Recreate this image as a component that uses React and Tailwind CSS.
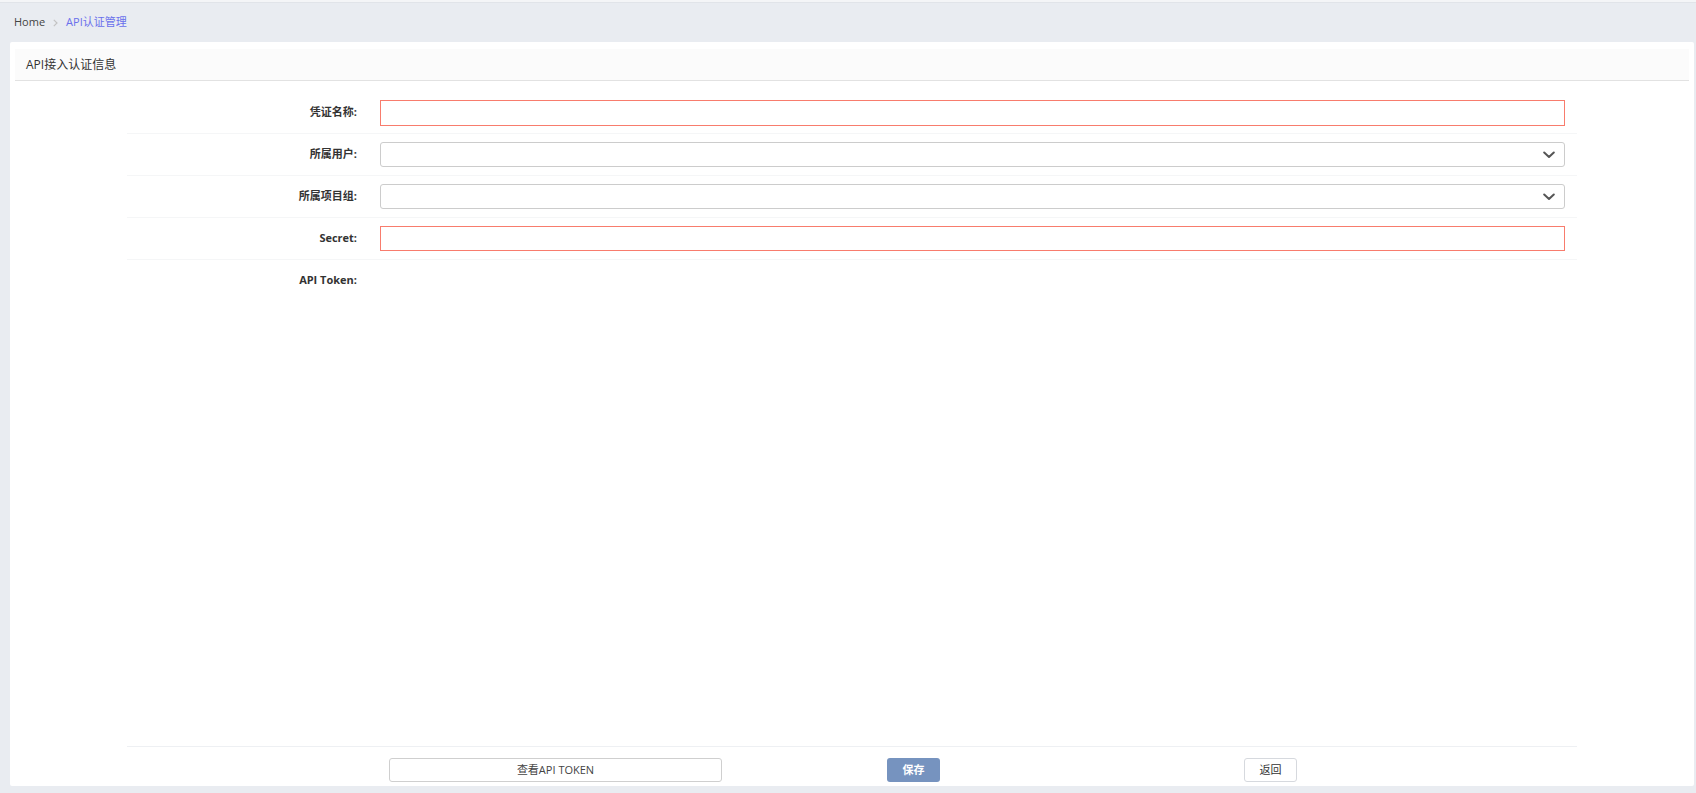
import React from "react";

const FONT = { fontFamily: '"Open Sans", "Noto Sans CJK SC", sans-serif' };

function Chevron() {
  return (
    <svg width="12" height="8" viewBox="0 0 12 8" fill="none">
      <polyline points="1.2,1.5 6,6 10.8,1.5" stroke="#555" strokeWidth="2" strokeLinecap="round" strokeLinejoin="round" />
    </svg>
  );
}

function Row({ label, children, last }) {
  return (
    <div className={"flex items-center py-[8px] " + (last ? "" : "border-b border-[#f5f6f7]")}>
      <div className="w-[241px] shrink-0 pr-[11px] text-right text-[11px] font-bold text-[#333]">{label}</div>
      <div className="flex-1 pl-[12px] pr-[12px] h-[25px]">{children}</div>
    </div>
  );
}

export default function App() {
  return (
    <div className="w-[1696px] h-[793px] bg-[#e9ecf1] flex flex-col overflow-hidden" style={FONT}>
      <div className="h-[3px] bg-[#f4f5f7] border-b border-[#e1e4e9]" />
      <div className="h-[39px] flex items-center pl-[14px] text-[11px]">
        <span className="text-[#444]">Home</span>
        <span className="mx-[8px] flex items-center">
          <svg width="5" height="8" viewBox="0 0 5 8" fill="none">
            <polyline points="0.8,0.8 4,4 0.8,7.2" stroke="#c2c2c2" strokeWidth="1.2" />
          </svg>
        </span>
        <span className="text-[#6a70ec]">API认证管理</span>
      </div>
      <div className="ml-[10px] mr-[2px] h-[744px] bg-white rounded-[2px] px-[5px] pt-[7px] flex flex-col">
        <div className="h-[32px] bg-[#fbfbfb] border-b border-[#e2e2e2] flex items-center pl-[11px] text-[12px] text-[#333]">
          API接入认证信息
        </div>
        <div className="mx-[112px] mt-[11px] flex flex-col">
          <Row label="凭证名称:">
            <div className="h-[26px] border border-[#f87c6d] bg-white" />
          </Row>
          <Row label="所属用户:">
            <div className="h-[25px] border border-[#cccccc] rounded-[3px] bg-white flex items-center justify-end pr-[9px]">
              <Chevron />
            </div>
          </Row>
          <Row label="所属项目组:">
            <div className="h-[25px] border border-[#cccccc] rounded-[3px] bg-white flex items-center justify-end pr-[9px]">
              <Chevron />
            </div>
          </Row>
          <Row label="Secret:">
            <div className="h-[25px] border border-[#f87c6d] bg-white" />
          </Row>
          <Row label="API Token:" last>
            <div />
          </Row>
        </div>
        <div className="flex-1" />
        <div className="mx-[112px] border-t border-[#eef0f3] pt-[11px] pb-[4px] flex items-center">
          <button className="ml-[262px] w-[333px] h-[24px] border border-[#cfcfcf] rounded-[3px] bg-white text-[11px] text-[#444]">
            查看API TOKEN
          </button>
          <button className="ml-[165px] w-[53px] h-[24px] rounded-[3px] bg-[#7693bf] text-[11px] font-bold text-white">
            保存
          </button>
          <button className="ml-[304px] w-[53px] h-[24px] border border-[#d6d9de] rounded-[3px] bg-white text-[11px] text-[#333]">
            返回
          </button>
        </div>
      </div>
      <div className="flex-1" />
    </div>
  );
}
